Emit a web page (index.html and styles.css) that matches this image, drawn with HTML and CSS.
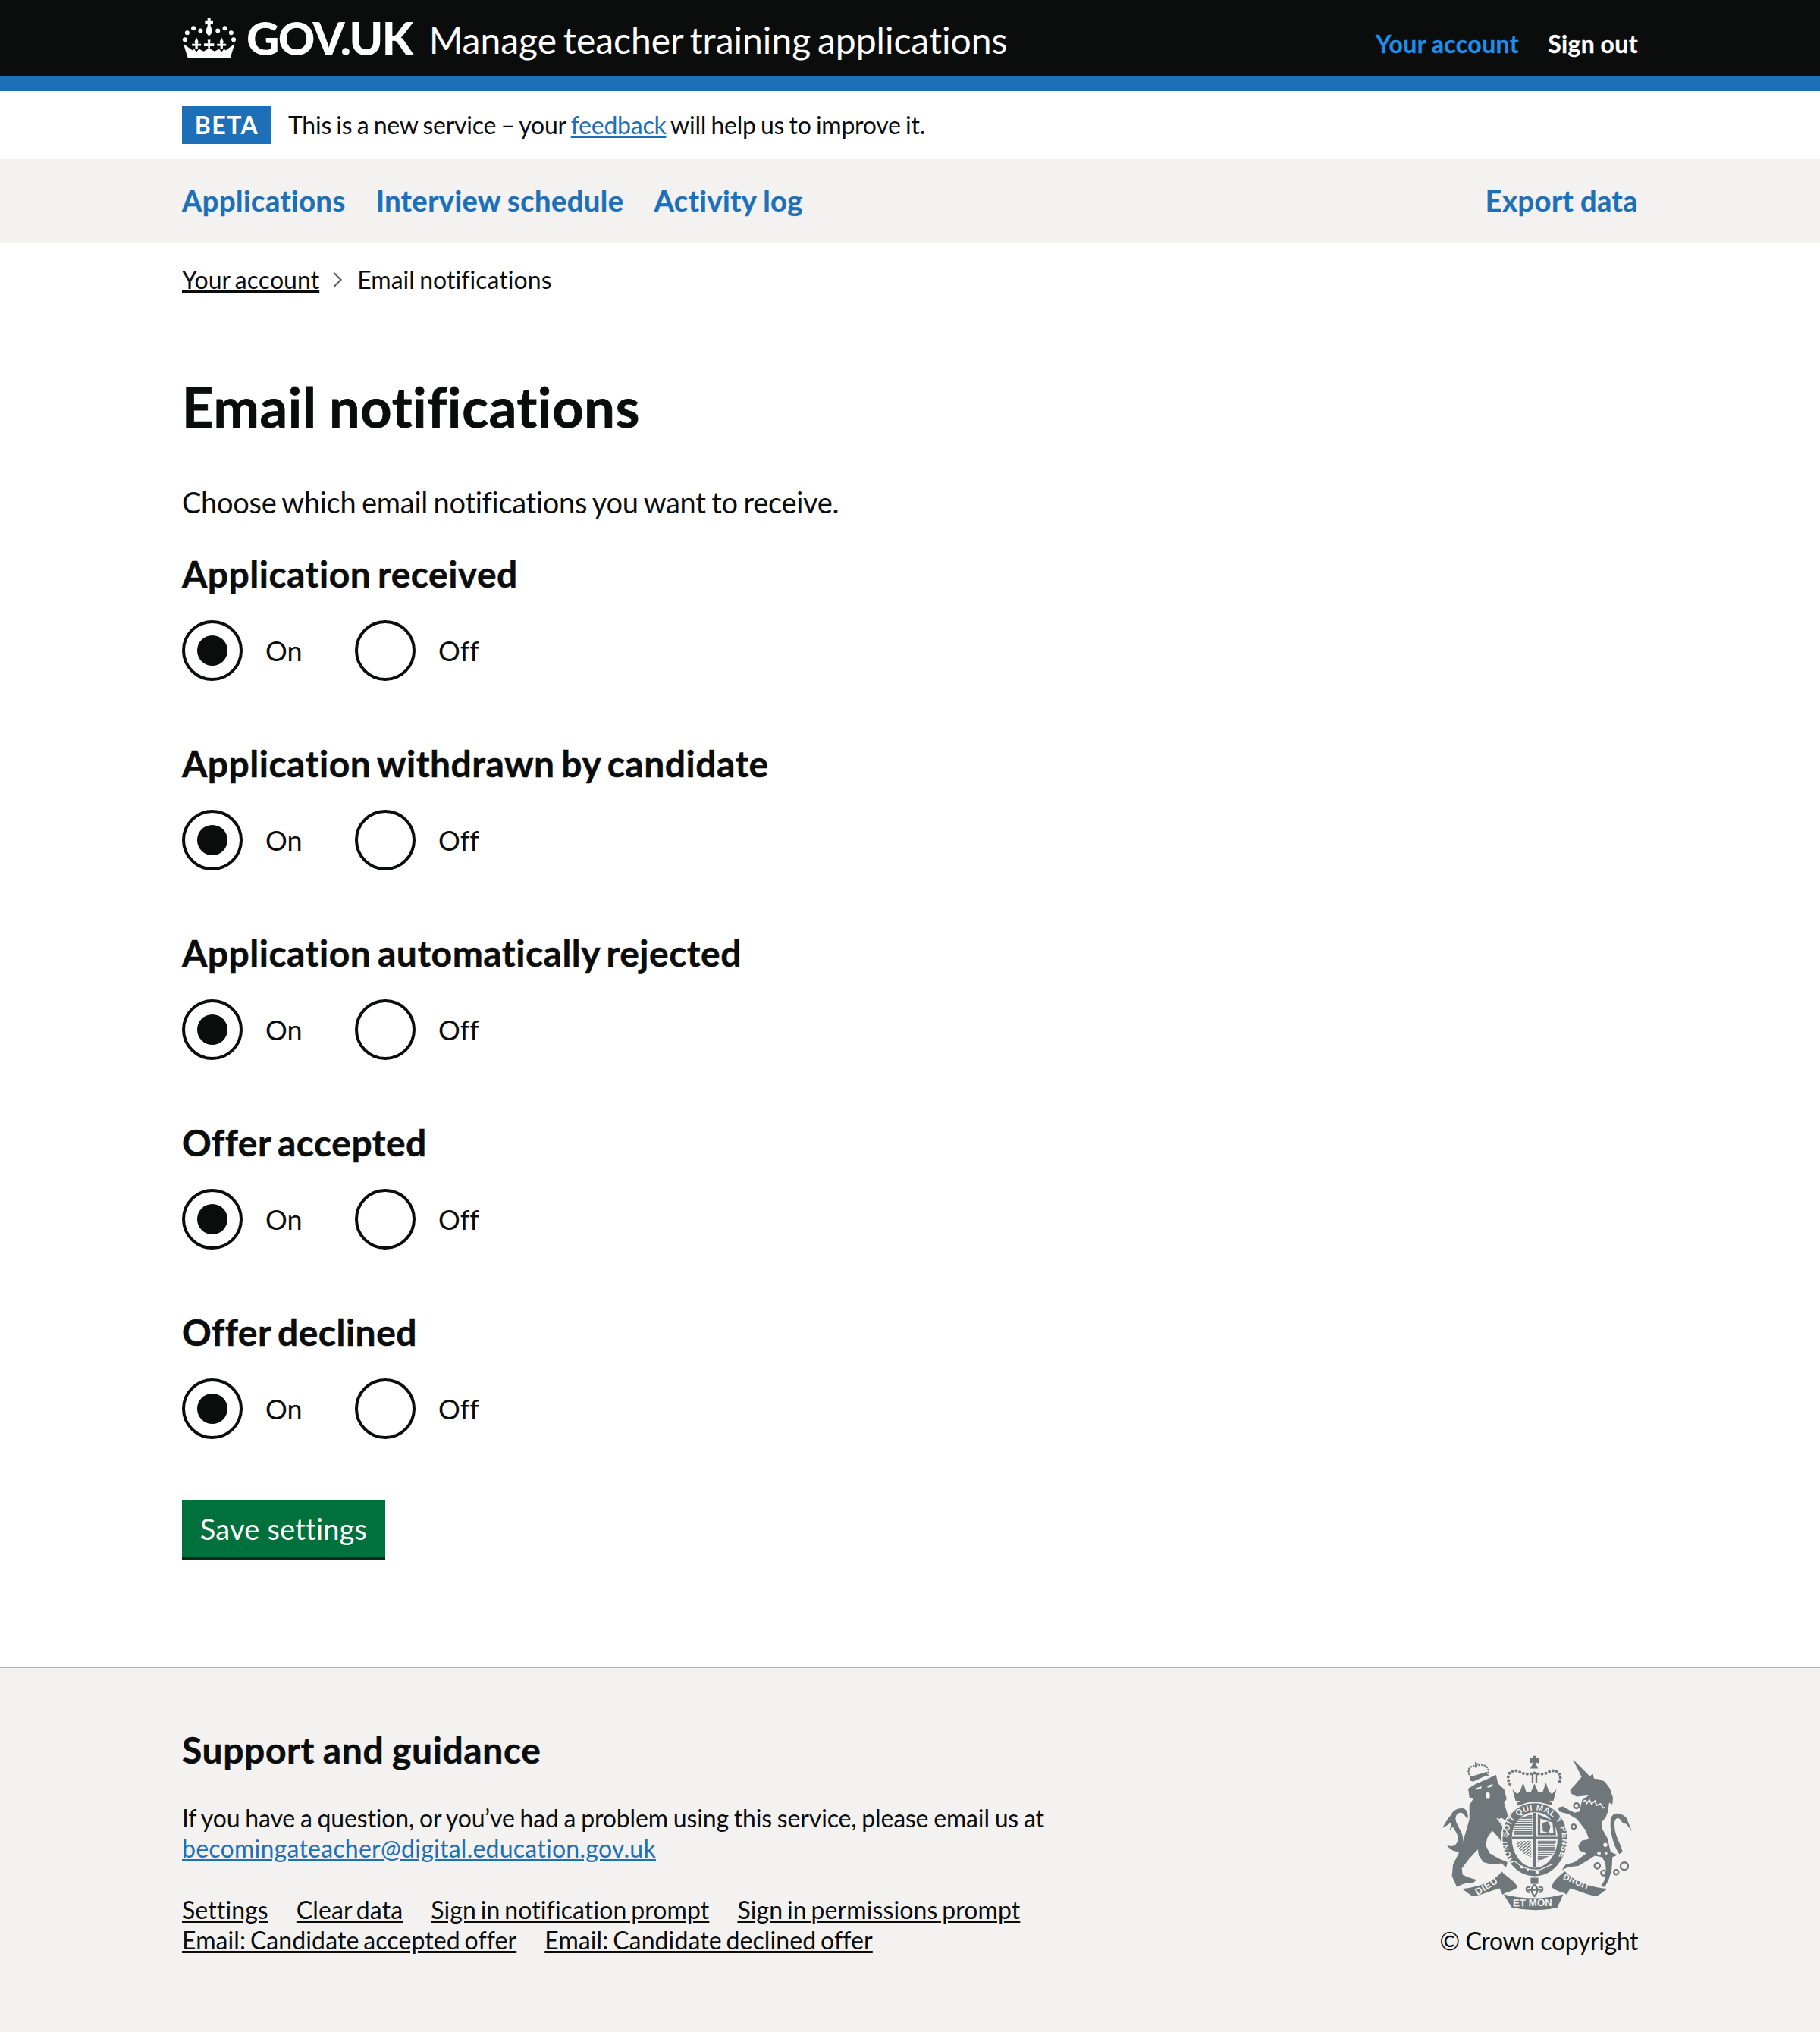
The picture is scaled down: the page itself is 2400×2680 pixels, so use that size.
FILE: index.html
```html
<!DOCTYPE html>
<html lang="en">
<head>
<meta charset="utf-8">
<title>Email notifications</title>
<link rel="stylesheet" href="styles.css">
</head>
<body>
<header class="site-header">
  <div class="container header-row">
    <a class="logo" href="#">
      <svg class="crown" viewBox="15 18 213 160" aria-hidden="true">
        <g fill="#fff">
          <circle cx="26" cy="103" r="9"/><circle cx="35" cy="76" r="9"/><circle cx="60" cy="58" r="9"/><circle cx="88" cy="68" r="9"/><circle cx="157" cy="68" r="9"/><circle cx="185" cy="58" r="9"/><circle cx="210" cy="76" r="9"/><circle cx="220" cy="103" r="9"/>
          <path d="M116 18h12v11h10v12h-10v8c6 14 12 26-6 40c-18-14-12-26-6-40v-8h-10V29h10z"/>
          <path d="M20 120l36 26 6-6 10 12 10-12 18 10 22-12 22 12 18-10 10 12 10-12 6 6 36-26-18 58H38z"/>
          <path d="M72 95l8 17-3 8h13v8H77v12H67v-12H54v-8h13l-3-8z"/>
          <path d="M116 104h12l-2 14h16v12h-16v8h-8v-8h-16v-12h16z"/>
          <path d="M172 95l8 17-3 8h13v8h-13v12h-10v-12h-13v-8h13l-3-8z"/>
        </g>
      </svg>
      <span class="logo-text">GOV.UK</span>
    </a>
    <a class="service-name" href="#">Manage teacher training applications</a>
    <nav class="account-nav">
      <a class="account-link current" href="#">Your account</a>
      <a class="account-link" href="#">Sign out</a>
    </nav>
  </div>
</header>
<div class="header-stripe"></div>

<div class="container phase-banner">
  <strong class="phase-tag">BETA</strong>
  <span>This is a new service – your <a class="link" href="#">feedback</a> will help us to improve it.</span>
</div>

<nav class="primary-nav">
  <div class="container primary-row">
    <a href="#">Applications</a>
    <a href="#">Interview schedule</a>
    <a href="#">Activity log</a>
    <a class="push" href="#">Export data</a>
  </div>
</nav>

<div class="container breadcrumbs">
  <a href="#">Your account</a>
  <span class="chevron"></span>
  <span>Email notifications</span>
</div>

<main class="container main">
  <h1>Email notifications</h1>
  <p class="lead">Choose which email notifications you want to receive.</p>
  <form>
    <fieldset class="group">
      <legend>Application received</legend>
      <div class="radios">
        <label class="radio"><span class="mark on"></span>On</label>
        <label class="radio"><span class="mark"></span>Off</label>
      </div>
    </fieldset>
    <fieldset class="group">
      <legend>Application withdrawn by candidate</legend>
      <div class="radios">
        <label class="radio"><span class="mark on"></span>On</label>
        <label class="radio"><span class="mark"></span>Off</label>
      </div>
    </fieldset>
    <fieldset class="group">
      <legend>Application automatically rejected</legend>
      <div class="radios">
        <label class="radio"><span class="mark on"></span>On</label>
        <label class="radio"><span class="mark"></span>Off</label>
      </div>
    </fieldset>
    <fieldset class="group">
      <legend>Offer accepted</legend>
      <div class="radios">
        <label class="radio"><span class="mark on"></span>On</label>
        <label class="radio"><span class="mark"></span>Off</label>
      </div>
    </fieldset>
    <fieldset class="group">
      <legend>Offer declined</legend>
      <div class="radios">
        <label class="radio"><span class="mark on"></span>On</label>
        <label class="radio"><span class="mark"></span>Off</label>
      </div>
    </fieldset>
    <button class="button" type="button">Save settings</button>
  </form>
</main>

<footer class="footer">
  <div class="container footer-row">
    <div class="footer-main">
      <h2>Support and guidance</h2>
      <p>If you have a question, or you’ve had a problem using this service, please email us at<br><a class="link email-link" href="#">becomingateacher@digital.education.gov.uk</a></p>
      <ul class="footer-links">
        <li><a href="#">Settings</a></li>
        <li><a href="#">Clear data</a></li>
        <li><a href="#">Sign in notification prompt</a></li>
        <li><a href="#">Sign in permissions prompt</a></li>
        <li><a href="#">Email: Candidate accepted offer</a></li>
        <li><a href="#">Email: Candidate declined offer</a></li>
      </ul>
    </div>
    <div class="footer-meta">
      <svg class="arms" viewBox="130 75 755 620" aria-hidden="true">
        <defs>
          <pattern id="hatch-h" width="8" height="9" patternUnits="userSpaceOnUse"><rect width="8" height="5" fill="#6f777b"/></pattern>
          <pattern id="hatch-d" width="9" height="9" patternUnits="userSpaceOnUse" patternTransform="rotate(50)"><rect width="4" height="9" fill="#6f777b"/></pattern>
        </defs>
        <g fill="#6f777b">
          <!-- royal crown -->
          <path d="M491 80h12v10l11-4v24l-11-4v8l9 16h-32l9-16v-8l-11 4V86l11 4z"/>
          <rect x="486" y="148" width="7" height="40"/><rect x="501" y="148" width="7" height="40"/>
          <path d="M410 213l18 18 12-9 12-36 12 36 18 3 15-35 15 35 18-3 12-36 12 36 12 9 18-18-12 45H422z"/>
          <path d="M428 262q68-24 140 0l-3 14q-66-20-134 1z"/>
          <!-- lion -->
          <g transform="translate(105 60)">
            <path d="M138 103l67-20 1 13-56 26-12-4z"/>
            <path d="M157 58v-14h6v5h7v6h-7v12h-6z"/>
            <path d="M130 150l32-20 43-18 35-17 8 35 24 22 10 38-10 15 13 45 7 35-30-20-12 5 40 60 15 15-10 20-30 7-13-27-27-30-20 30-5 30 15 30 35 20 35 15-5 22-18-17-37 5-35-10-18-25-4-25-33 35-30 40 3 25 22 10 33 10-13 12-35 3-30 13-19-43 4-45 30-60 18-60 17-60v-55l15-25-15-5z"/>
            <path d="M118 395c-33 10-58 0-73-23 25 13 45-2 45-27 0-25-40-55-30-85 5-20 25-35 50-32 15 4 22 22 18 42l-10-12c-8-18-28-18-36 0-10 27 28 57 28 92 0 25-15 45 8 45z"/>
            <path d="M95 238c-35 2-50 42-67 67 17-10 32-15 42-35-10 15-5 30-15 45 15-10 22-30 22-45 0-12 8-25 18-32z"/>
          </g>
          <!-- unicorn -->
          <g transform="translate(480 60)">
            <path d="M168 33l67 67 13-8 4 18 20 2 23 10 20 28 12 35-2 27-13-7-5 35-9 25-16 17 3 28 20 35 13 55 27 12-20 8-3 50-12 40-15 28-17-2 14-21 8-35-3-40-15-20-27-5-15 10-50 30-40 5-25 12 15-22 35-10 47-35-27-10-5-20 15-20 27-5-12-35-20-25-15-20-20-12-15-8-35-10-5-15 20-5 25 15 20 10 20-5 10-45 57-40-22 20-27 3-30 3-23-13-2-13 25-27 20-25z"/>
            <path d="M352 408c-25-35-42-105-32-143 10-25 40-20 60 0l22 53-22-28-15-5c-15-30-32-20-32 5 0 50 27 80 32 110z" />
          </g>
          <!-- shield ring -->
          <path fill-rule="evenodd" stroke="#f3f2f1" stroke-width="5" d="M498 265c74 0 130 62 130 140 0 85-58 153-130 153s-130-68-130-153c0-78 56-140 130-140zm0 40c-50 0-88 44-88 100 0 60 38 115 88 115s88-55 88-115c0-56-38-100-88-100z"/>
          <rect x="492" y="305" width="11" height="215"/>
          <rect x="408" y="400" width="180" height="10"/>
          <!-- ribbon -->
          <path d="M208 606c70-6 130-30 160-68 20 22 56 40 62 62-20 18-50 20-55 26l-4 4-12-26c-30 8-70 26-104 32-20-10-30-24-47-30z"/>
          <path d="M788 606c-70-6-130-30-172-70-22 20-50 40-50 64 18 18 48 20 55 26l4 4 12-26c30 8 70 26 104 32 20-10 30-24 47-30z"/>
          <path d="M375 628q120 30 236 0l-24 52q-90 20-180-1z"/>
          <!-- fleur -->
          <path d="M482 562h30v24h-30z"/>
        </g>
        <!-- shield quarters -->
        <path fill="url(#hatch-h)" d="M416 334l72-24v84h-72z"/>
        <path fill="url(#hatch-h)" d="M510 416h72l-8 50-64 34z"/>
        <path fill="#6f777b" d="M510 310l68 30 4 54h-72zM520 328v56h52l-4-40z"/>
        <path fill="#6f777b" d="M528 345l22-6 10 20-6 25-24-6z"/>
        <path fill="url(#hatch-d)" d="M424 418l60-2v64l-26-10-26-26z"/>
        <g fill="none" stroke="#6f777b">
          <path d="M400 192c-22-40 10-64 38-48 20 12 48 8 58 4 10 4 38 8 58-4 28-16 60 8 38 48" stroke-width="12" stroke-linecap="round" stroke-dasharray="0 15"/>
          <path d="M140 178c-20-25-2-46 22-42 20-10 46-2 48 20 0 12-2 14-5 20" transform="translate(105 -16)" stroke-width="8" stroke-linecap="round" stroke-dasharray="0 11"/>
          <g stroke-width="7">
            <circle cx="745" cy="515" r="11"/><circle cx="770" cy="543" r="10"/><circle cx="820" cy="540" r="9"/><circle cx="852" cy="516" r="15"/><circle cx="663" cy="277" r="10"/><circle cx="652" cy="360" r="9"/>
          </g>
          <g stroke-width="7">
            <path d="M497 590c13 10 18 25 0 45c-18-20-13-35 0-45z"/>
            <path d="M480 600c-18-10-22 20 0 20M514 600c18-10 22 20 0 20M470 610h54"/>
          </g>
          <path d="M349 326l48 66" stroke="#f3f2f1" stroke-width="4"/>
          <path d="M690 260l10-4 4 12 10-14 8 16 14-12 6 18 16-6 10 16 8-2" stroke="#f3f2f1" stroke-width="5"/>
          <path d="M420 498c30 26 60 38 100 32l48-22" stroke="#f3f2f1" stroke-width="4"/>
        </g>
        <g fill="#f3f2f1">
          <circle cx="788" cy="385" r="10"/><circle cx="777" cy="432" r="8"/><circle cx="752" cy="465" r="7"/><circle cx="780" cy="465" r="5"/>
          <ellipse cx="313" cy="237" rx="8" ry="14"/>
          <path d="M265 208l24-7-3 8-18 5zM310 199l24-8-8 12-14 3z"/>
          <circle cx="447" cy="520" r="6"/><circle cx="508" cy="541" r="7"/><circle cx="470" cy="530" r="5"/>
        </g>
        <g fill="#f3f2f1" font-family="'Liberation Sans', Arial, sans-serif" font-weight="700">
          <path id="arms-ring" d="M418 500C385 445 382 390 408 345 450 280 545 280 590 345 616 395 612 450 578 505" fill="none"/>
          <text font-size="33" letter-spacing="2"><textPath href="#arms-ring">HONI SOIT QUI MAL Y PENSE</textPath></text>
          <text x="412" y="676" font-size="40" transform="rotate(-1 412 676)">ET MON</text>
          <text x="272" y="632" font-size="38" letter-spacing="2" transform="rotate(-32 272 632)">DIEU</text>
          <text x="608" y="566" font-size="34" letter-spacing="1" transform="rotate(24 608 566)">DROIT</text>
        </g>
      </svg>
      <span class="copyright">© Crown copyright</span>
    </div>
  </div>
</footer>
</body>
</html>
```

FILE: styles.css
```css
* { box-sizing: border-box; }
html, body { margin: 0; padding: 0; }
body {
  background: #fff;
  color: #0b0c0c;
  font-family: Lato, "Noto Sans", Arial, sans-serif;
  font-size: 38px;
  line-height: 50px;
  font-variant-ligatures: none;
}
a { color: inherit; }
.container { width: 1920px; margin: 0 auto; }

.site-header { background: #0b0c0c; height: 100px; }
.header-row { display: flex; align-items: center; height: 100px; }
.logo { display: flex; align-items: center; color: #fff; text-decoration: none; }
.crown { width: 71px; height: 53px; margin-right: 14px; }
.logo-text { font-size: 60px; font-weight: 900; line-height: 60px; letter-spacing: -1.6px; }
.service-name { color: #fff; text-decoration: none; font-size: 48px; margin-left: 22px; padding-top: 6px; letter-spacing: 0; word-spacing: -3.5px; }
.account-nav { margin-left: auto; display: flex; gap: 38px; padding-top: 16px; }
.account-link { color: #fff; text-decoration: none; font-size: 32px; font-weight: 700; letter-spacing: .4px; word-spacing: -1px; -webkit-text-stroke: .3px; }
.account-link.current { color: #1d8feb; }
.header-stripe { height: 20px; background: #1d70b8; }

.phase-banner { display: flex; align-items: center; height: 90px; font-size: 32px; gap: 22px; letter-spacing: -.25px; word-spacing: -1.6px; }
.phase-tag { background: #1d70b8; color: #fff; height: 50px; width: 118px; display: flex; align-items: center; justify-content: center; font-size: 32px; letter-spacing: 1.5px; }
.link { color: #1d70b8; }

.primary-nav { background: #f3f2f1; height: 110px; }
.primary-row { display: flex; align-items: center; height: 110px; gap: 40px; padding-bottom: 2px; }
.primary-row a { color: #1d70b8; text-decoration: none; font-weight: 700; font-size: 38px; letter-spacing: .5px; word-spacing: -1px; -webkit-text-stroke: .4px; }
.primary-row .push { margin-left: auto; }

.breadcrumbs { display: flex; align-items: center; height: 100px; padding-bottom: 2px; font-size: 32px; letter-spacing: .05px; word-spacing: -2px; }
.chevron { width: 14px; height: 14px; border-top: 2px solid #505a5f; border-right: 2px solid #505a5f; transform: rotate(45deg); margin: 0 23px 0 13px; }

.main { padding-top: 66px; padding-bottom: 140px; }
h1 { margin: 0 0 52px; font-size: 72px; line-height: 100px; font-weight: 700; letter-spacing: .8px; word-spacing: -2px; -webkit-text-stroke: .8px; }
.lead { margin: 0 0 40px; line-height: 48px; padding-bottom: 2px; letter-spacing: -.3px; word-spacing: -1.7px; }
.group { border: 0; margin: 0 0 60px; padding: 0; }
legend { padding: 0; margin: 0 0 32px; font-size: 48px; line-height: 58px; font-weight: 700; letter-spacing: .5px; word-spacing: -3.5px; -webkit-text-stroke: .5px; }
.radios { display: flex; gap: 40px; margin-bottom: 20px; }
.radio { display: flex; align-items: center; height: 80px; width: 188px; font-size: 36px; gap: 30px; }
.mark { width: 80px; height: 80px; border: 4px solid #0b0c0c; border-radius: 50%; display: flex; align-items: center; justify-content: center; }
.mark.on::after { content: ""; width: 40px; height: 40px; border-radius: 50%; background: #0b0c0c; }
.button { display: block; height: 80px; width: 268px; background: #00703c; color: #fff; border: 0; border-bottom: 4px solid #002d18; padding: 0; font: inherit; font-size: 38px; letter-spacing: .2px; }

.footer { background: #f3f2f1; border-top: 2px solid #b1b4b6; height: 482px; padding-top: 78px; font-size: 32px; line-height: 40px; }
.footer-row { display: flex; justify-content: space-between; }
.footer h2 { margin: 0 0 40px; font-size: 48px; line-height: 60px; font-weight: 700; letter-spacing: .6px; word-spacing: -1.5px; -webkit-text-stroke: .5px; }
.footer p { margin: 0 0 41px; letter-spacing: -.15px; word-spacing: -1.2px; }
.email-link { letter-spacing: .25px; }
.footer-links { list-style: none; margin: 0; padding: 0; display: flex; flex-wrap: wrap; column-gap: 37px; width: 1200px; letter-spacing: .1px; word-spacing: -2.5px; }
.footer-meta { display: flex; flex-direction: column; align-items: flex-end; }
.arms { width: 252px; height: 207px; margin-right: 7px; margin-top: 36px; margin-bottom: 19px; }
.copyright { white-space: nowrap; letter-spacing: -.4px; }
```
